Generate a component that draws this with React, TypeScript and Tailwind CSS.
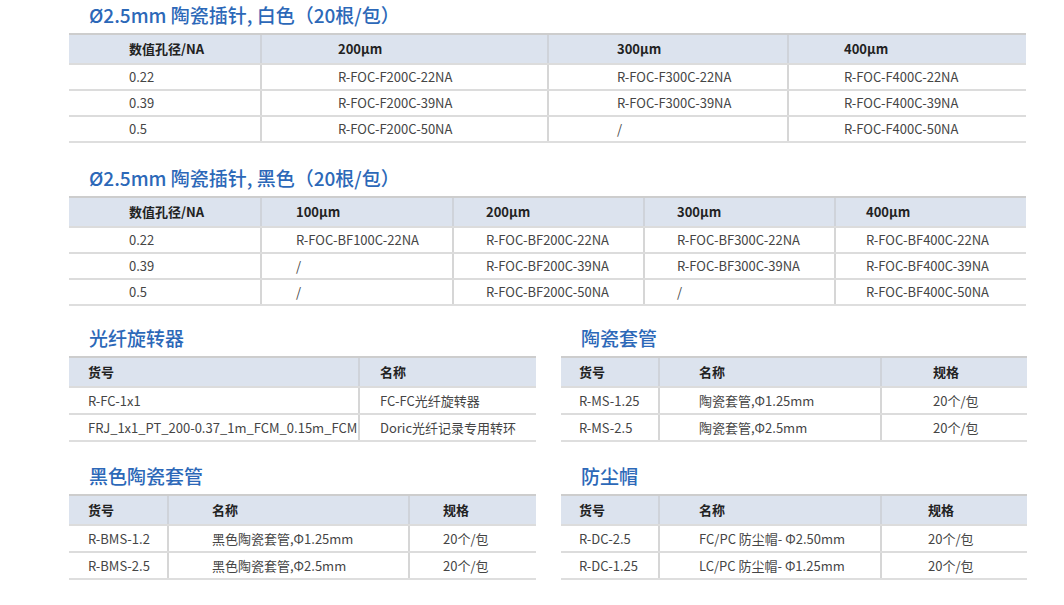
type Col = { label: string; cls: string };

type TableProps = {
  cols: Col[];
  rows: string[][];
  rowCls?: string;
};

function SpecTable({ cols, rows, rowCls = "h-[26px]" }: TableProps) {
  return (
    <div className="border-t-2 border-b-2 border-[#cdcdcd] border-b-[#dedede]">
      <div className="flex h-[28px] bg-[#dce3ee]">
        {cols.map((c, i) => (
          <div
            key={i}
            className={`flex items-center text-[13px] font-bold text-[#222] ${c.cls} ${
              i > 0 ? "border-l-2 border-[#cfd3da]" : ""
            }`}
          >
            {c.label}
          </div>
        ))}
      </div>
      {rows.map((row, r) => (
        <div key={r} className={`flex border-t-2 border-[#dcdcdc] ${rowCls}`}>
          {row.map((cell, i) => (
            <div
              key={i}
              className={`flex items-center text-[13px] text-[#454545] ${cols[i].cls} ${
                i > 0 ? "border-l-2 border-[#d6d6d6]" : ""
              }`}
            >
              {cell}
            </div>
          ))}
        </div>
      ))}
    </div>
  );
}

function Title({ children }: { children: string }) {
  return (
    <div className="flex h-[36px] items-center pl-[20px] text-[19px] font-medium text-[#2c68b8]">
      {children}
    </div>
  );
}

const whitePins = {
  cols: [
    { label: "数值孔径/NA", cls: "w-[191px] pl-[60px]" },
    { label: "200µm", cls: "w-[287px] pl-[76px]" },
    { label: "300µm", cls: "w-[240px] pl-[68px]" },
    { label: "400µm", cls: "w-[239px] pl-[55px]" },
  ],
  rows: [
    ["0.22", "R-FOC-F200C-22NA", "R-FOC-F300C-22NA", "R-FOC-F400C-22NA"],
    ["0.39", "R-FOC-F200C-39NA", "R-FOC-F300C-39NA", "R-FOC-F400C-39NA"],
    ["0.5", "R-FOC-F200C-50NA", "/", "R-FOC-F400C-50NA"],
  ],
};

const blackPins = {
  cols: [
    { label: "数值孔径/NA", cls: "w-[191px] pl-[60px]" },
    { label: "100µm", cls: "w-[192px] pl-[34px]" },
    { label: "200µm", cls: "w-[191px] pl-[32px]" },
    { label: "300µm", cls: "w-[191px] pl-[32px]" },
    { label: "400µm", cls: "w-[192px] pl-[30px]" },
  ],
  rows: [
    ["0.22", "R-FOC-BF100C-22NA", "R-FOC-BF200C-22NA", "R-FOC-BF300C-22NA", "R-FOC-BF400C-22NA"],
    ["0.39", "/", "R-FOC-BF200C-39NA", "R-FOC-BF300C-39NA", "R-FOC-BF400C-39NA"],
    ["0.5", "/", "R-FOC-BF200C-50NA", "/", "R-FOC-BF400C-50NA"],
  ],
};

const rotary = {
  cols: [
    { label: "货号", cls: "w-[289px] pl-[19px]" },
    { label: "名称", cls: "w-[178px] pl-[20px]" },
  ],
  rows: [
    ["R-FC-1x1", "FC-FC光纤旋转器"],
    ["FRJ_1x1_PT_200-0.37_1m_FCM_0.15m_FCM", "Doric光纤记录专用转环"],
  ],
};

const sleeves = {
  cols: [
    { label: "货号", cls: "w-[97px] pl-[18px]" },
    { label: "名称", cls: "w-[222px] pl-[39px]" },
    { label: "规格", cls: "w-[147px] pl-[51px]" },
  ],
  rows: [
    ["R-MS-1.25", "陶瓷套管,Φ1.25mm", "20个/包"],
    ["R-MS-2.5", "陶瓷套管,Φ2.5mm", "20个/包"],
  ],
};

const blackSleeves = {
  cols: [
    { label: "货号", cls: "w-[98px] pl-[19px]" },
    { label: "名称", cls: "w-[241px] pl-[43px]" },
    { label: "规格", cls: "w-[128px] pl-[33px]" },
  ],
  rows: [
    ["R-BMS-1.2", "黑色陶瓷套管,Φ1.25mm", "20个/包"],
    ["R-BMS-2.5", "黑色陶瓷套管,Φ2.5mm", "20个/包"],
  ],
};

const dustCaps = {
  cols: [
    { label: "货号", cls: "w-[97px] pl-[18px]" },
    { label: "名称", cls: "w-[222px] pl-[39px]" },
    { label: "规格", cls: "w-[147px] pl-[46px]" },
  ],
  rows: [
    ["R-DC-2.5", "FC/PC 防尘帽- Φ2.50mm", "20个/包"],
    ["R-DC-1.25", "LC/PC 防尘帽- Φ1.25mm", "20个/包"],
  ],
};

export default function App() {
  return (
    <div
      className="h-[605px] w-[1064px] overflow-hidden bg-white pl-[69px]"
      style={{ fontFamily: '"Noto Sans CJK SC", "Noto Sans", sans-serif' }}
    >
      <div className="w-[957px]">
        <div className="-mt-[3px]">
          <Title>Ø2.5mm 陶瓷插针, 白色（20根/包）</Title>
        </div>
        <SpecTable {...whitePins} />

        <div className="mt-[17px]">
          <Title>Ø2.5mm 陶瓷插针, 黑色（20根/包）</Title>
        </div>
        <SpecTable {...blackPins} />

        <div className="mt-[14px] flex gap-[25px]">
          <div className="w-[467px]">
            <Title>光纤旋转器</Title>
            <SpecTable {...rotary} rowCls="h-[27px]" />
          </div>
          <div className="w-[466px]">
            <Title>陶瓷套管</Title>
            <SpecTable {...sleeves} rowCls="h-[27px]" />
          </div>
        </div>

        <div className="mt-[16px] flex gap-[25px]">
          <div className="w-[467px]">
            <Title>黑色陶瓷套管</Title>
            <SpecTable {...blackSleeves} rowCls="h-[27px]" />
          </div>
          <div className="w-[466px]">
            <Title>防尘帽</Title>
            <SpecTable {...dustCaps} rowCls="h-[27px]" />
          </div>
        </div>
      </div>
    </div>
  );
}
